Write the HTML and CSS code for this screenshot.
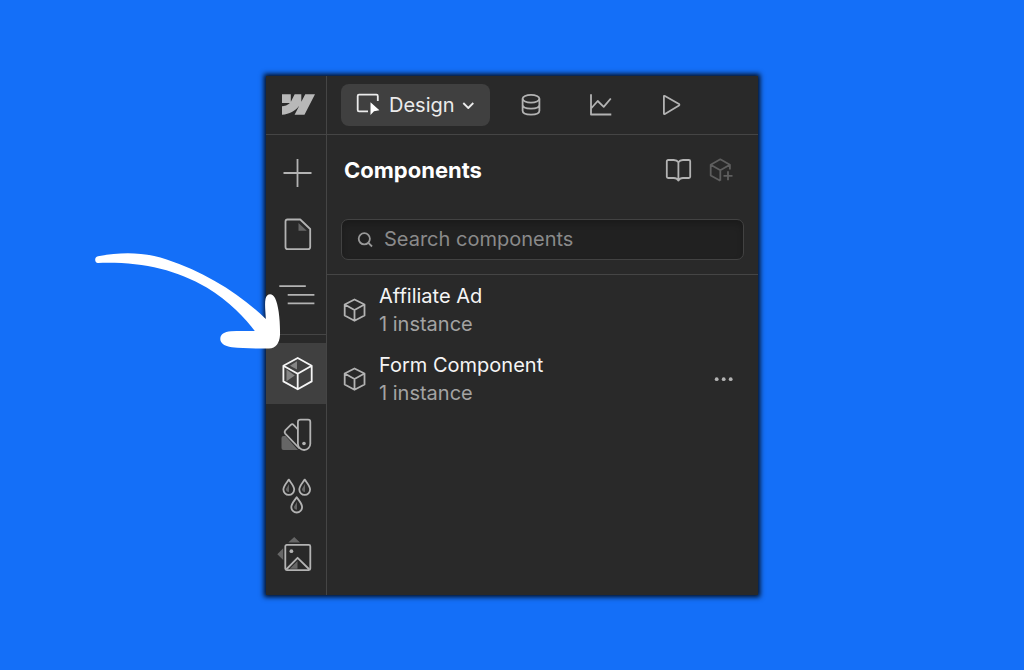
FILE: index.html
```html
<!DOCTYPE html>
<html lang="en">
<head>
  <meta charset="UTF-8">
  <title>Components</title>
  <meta name="viewport" content="width=device-width, initial-scale=1.0">
  <link rel="stylesheet" href="styles.css">
</head>
<body>

<!-- Cube shared by the component rows -->
<svg class="sprite" aria-hidden="true">
  <symbol id="cube" viewBox="0 0 28 28">
    <path d="M13.5 3.5 23.5 8.5V19.5L13.5 24.8 3.7 19.5V8.5ZM3.7 8.5 13.5 14 23.5 8.5M13.5 14V24.8"/>
  </symbol>
</svg>

<div class="app">
  <nav class="sidebar" aria-label="Tools">
    <a class="logo" href="#" aria-label="Home">
      <svg width="33" height="21" viewBox="0 4.5 24 15"><path d="m24 4.515-7.658 14.97H9.149l3.205-6.204h-.144C9.566 16.713 5.621 18.973 0 19.485v-6.118s3.596-.213 5.71-2.435H0V4.515h6.417v5.278l.144-.001 2.622-5.277h4.854v5.244h.144l2.72-5.244H24Z"/></svg>
    </a>

    <div class="tools">
      <button class="tool" aria-label="Add">
        <svg class="icon" width="40" height="41"><path d="M7.5 20H35.5M21.5 6V34"/></svg>
      </button>
      <button class="tool" aria-label="Pages">
        <svg class="icon" width="40" height="41">
          <path class="shade" d="M22.5 9V16.8H30.8Z"/>
          <path d="M11.500 5.500H24.200L34.200 15V33Q34.200 35.200 32 35.200H11.700Q9.500 35.200 9.500 33V7.500Q9.500 5.500 11.500 5.500Z"/>
        </svg>
      </button>
      <button class="tool" aria-label="Navigator">
        <svg class="icon" width="40" height="41"><path d="M3.3 11.2H29.8M11.7 19.8H38.4M11.7 28.4H38.4"/></svg>
      </button>
    </div>

    <div class="tools">
      <button class="tool active" aria-label="Components">
        <svg class="icon" width="40" height="41">
          <path class="shade" d="M14 12.8 21 8.2V16.5ZM10.5 16.5V28.2L18.8 22.5Z"/>
          <path d="M21.7 5 35.7 12.8V28.4L21.7 36.3 7.4 28.4V12.8ZM7.4 12.8 21.7 20.8 35.7 12.8M21.7 20.8V36.3"/>
        </svg>
      </button>
      <button class="tool" aria-label="Variables">
        <svg class="icon" width="40" height="41">
          <path class="shade" d="M5.5 24Q5.5 22 7.5 22H9.5L22 36H7.5Q5.5 36 5.5 34Z"/>
          <path d="M24.5 5.7H32Q34.3 5.7 34.3 8V29.8A6.2 6.2 0 0 1 21.9 29.8V8Q21.9 5.7 24.5 5.7Z"/>
          <path d="M21.9 15.5 17.6 10.8Q16.3 9.3 14.8 10.8L9.3 16.4Q8 18 9.2 19.6L23.5 34.5"/>
          <circle class="dot" cx="28" cy="29.5" r="1.8"/>
        </svg>
      </button>
      <button class="tool" aria-label="Style selectors">
        <svg class="icon" width="40" height="41">
          <path class="shade" d="M13 9V17Q10 17 10 14ZM29 9V17Q26 17 26 14ZM21 26.7V34.7Q18 34.7 18 31.7Z"/>
          <path d="M12.8 4.6C15 8 18.2 11 18.2 14.5A5.4 5.4 0 0 1 7.4 14.5C7.4 11 10.6 8 12.8 4.6Z"/>
          <path d="M28.7 4.6C30.9 8 34.1 11 34.1 14.5A5.4 5.4 0 0 1 23.3 14.5C23.3 11 26.5 8 28.7 4.6Z"/>
          <path d="M20.7 22.2C22.9 25.6 26.1 28.6 26.1 32.1A5.4 5.4 0 0 1 15.3 32.1C15.3 28.6 18.5 25.6 20.7 22.2Z"/>
        </svg>
      </button>
      <button class="tool" aria-label="Assets">
        <svg class="icon" width="40" height="41">
          <path class="shade" d="M12.3 6.5 18.2 1 24 6.5ZM7.2 12.3V24L1.3 18.2ZM21.5 25V32.8H13.8Z"/>
          <rect x="9.3" y="8.9" width="25" height="25.2" rx="1.5"/>
          <path d="M10.2 33.5 21.6 21.8 33.4 33.5"/>
          <circle class="dot" cx="15.4" cy="15.2" r="1.9"/>
        </svg>
      </button>
    </div>
  </nav>

  <main class="main">
    <header class="topbar">
      <button class="mode">
        <svg class="icon" width="26" height="26">
          <path d="M12 19.3H3Q1.7 19.3 1.7 18V4Q1.7 2.7 3 2.7H20.5Q21.8 2.7 21.8 4V9"/>
          <path class="cursor" d="M14.5 10.2V23L18 19.2L23.4 18.2Z"/>
        </svg>
        <span>Design</span>
        <svg class="icon" width="14" height="14"><path d="M1.3 5 6.3 10 11.3 5"/></svg>
      </button>
      <div class="views">
        <button class="icon-button" aria-label="CMS">
          <svg class="icon" width="28" height="28"><ellipse cx="14" cy="7.7" rx="8.4" ry="3.9"/><path d="M5.6 7.7V19.8C5.6 25 22.4 25 22.4 19.8V7.7M5.6 13.7C5.6 18.9 22.4 18.9 22.4 13.7"/></svg>
        </button>
        <button class="icon-button" aria-label="Insights">
          <svg class="icon" width="28" height="28"><path d="M4 3.3V23.5H24.3M4.5 17 10.7 10 16.7 15.9 23.8 7.5"/></svg>
        </button>
        <button class="icon-button" aria-label="Preview">
          <svg class="icon" width="28" height="28"><path d="M6.9 5.500Q6.900 4.500 7.900 5L22 13Q22.800 13.700 22 14.400L7.900 22.900Q6.900 23.400 6.900 22.400Z"/></svg>
        </button>
      </div>
    </header>

    <div class="panel-head">
      <h1>Components</h1>
      <div class="actions">
        <button class="icon-button" aria-label="Libraries">
          <svg class="icon" width="28" height="28"><path d="M13.4 6.2Q12 4 8.8 4H3.2Q1.8 4 1.8 5.3V20.8Q1.8 22 3.2 22H8.8Q12 22 13.4 24.5Q14.8 22 18 22H23.8Q25.2 22 25.2 20.8V5.3Q25.2 4 23.8 4H18Q14.8 4 13.4 6.2ZM13.4 6.2V24.5"/></svg>
        </button>
        <button class="icon-button" aria-label="New component" disabled>
          <svg class="icon" width="28" height="28"><path d="M13.3 24.8 3.7 19.5V8.7L13.3 3.3 22.9 8.7V13.5M3.7 8.7 13.3 14.2 22.9 8.7M13.3 14.2V24.8M21 15.3V24.3M16.5 19.8H25.5"/></svg>
        </button>
      </div>
    </div>

    <label class="search">
      <svg class="icon" width="20" height="20"><circle cx="9.3" cy="9.8" r="5.6"/><path d="M13.4 13.9 17 17.5"/></svg>
      <input type="search" placeholder="Search components" aria-label="Search components">
    </label>

    <ul class="list">
      <li class="row">
        <svg class="icon" width="28" height="28"><use href="#cube"/></svg>
        <div class="info">
          <p class="name">Affiliate Ad</p>
          <p class="count">1 instance</p>
        </div>
      </li>
      <li class="row">
        <svg class="icon" width="28" height="28"><use href="#cube"/></svg>
        <div class="info">
          <p class="name">Form Component</p>
          <p class="count">1 instance</p>
        </div>
        <button class="icon-button" aria-label="More options">
          <svg class="icon" width="28" height="28"><g class="dot"><circle cx="6.700" cy="14.200" r="1.900"/><circle cx="13.700" cy="14.200" r="1.900"/><circle cx="20.700" cy="14.200" r="1.900"/></g></svg>
        </button>
      </li>
    </ul>
  </main>

  <!-- Arrow pointing at the components tool -->
  <svg class="arrow" width="188" height="98" viewBox="94 252 188 98" aria-hidden="true">
    <path d="M98 256.3C120 252 143 251.500 166.700 259.500C205 272 240 294 265.800 319C265.500 312 264.500 304 265.500 299C266.500 293 272.500 292.500 275 298C278.500 305 280.300 320 280 335C279.500 343 276 348.500 269 348.500C256 348.600 242 348.200 232 347.200C224 346 220.200 343 220.300 338.800C220.500 334 224 332 231 331.300C239 330.600 247 331 254.800 331C246 319 229 301 206.700 287.500C175 269 140 261.500 98 262.900C94.500 263 94 257 98 256.300Z"/>
  </svg>
</div>

</body>
</html>
```

FILE: styles.css
```css
* {
  box-sizing: border-box;
}
body {
  background-color: #146ff8;
  color: #fff;
  font-family: Inter, "Liberation Sans", sans-serif;
  font-size: 20px;
  line-height: 28px;
  margin: 0;
  min-height: 100vh;
  padding: 24px;
  display: flex;
  align-items: center;
  justify-content: center;
}
h1, p, ul {
  margin: 0;
  padding: 0;
}
button {
  background: none;
  border: 0;
  padding: 0;
  color: inherit;
  font: inherit;
  cursor: pointer;
}
svg {
  display: block;
  flex: none;
}
.sprite {
  position: absolute;
  width: 0;
  height: 0;
}
.icon {
  fill: none;
  stroke: currentColor;
  stroke-width: 1.8;
  stroke-linejoin: round;
}
.icon .shade {
  fill: #666;
  stroke: none;
}
.icon .dot {
  fill: currentColor;
  stroke: none;
}
.app {
  position: relative;
  display: flex;
  width: 100%;
  max-width: 492px;
  background-color: #292929;
  box-shadow: 0 0 5px 2px rgba(0, 0, 0, 0.9);
}

/* Sidebar */
.sidebar {
  width: 61px;
  flex: none;
  border-right: 1px solid #454545;
  color: #b3b3b3;
}
.logo {
  display: flex;
  align-items: center;
  justify-content: center;
  height: 59px;
  padding-left: 4px;
  border-bottom: 1px solid #454545;
}
.logo path {
  fill: #b8b8b8;
}
.tools {
  padding: 8px 0;
}
.tools + .tools {
  border-top: 1px solid #454545;
}
.tool {
  display: flex;
  align-items: center;
  justify-content: center;
  width: 100%;
  height: 61px;
}
.tool.active {
  background-color: #404040;
  color: #f5f5f5;
}
.active .shade {
  fill: #858585;
}

/* Main panel */
.main {
  flex: 1;
  min-width: 0;
}
.topbar {
  display: flex;
  align-items: center;
  gap: 27px;
  height: 59px;
  padding: 0 14px;
  border-bottom: 1px solid #454545;
}
.mode {
  display: flex;
  align-items: center;
  gap: 7px;
  height: 42px;
  padding: 0 14px 0 15px;
  border-radius: 8px;
  background-color: #404040;
  color: #ebebeb;
}
.mode .cursor {
  fill: #fff;
  stroke: none;
}
.views {
  display: flex;
  gap: 42px;
}
.icon-button {
  color: #b3b3b3;
}
.icon-button:disabled {
  color: #5e5e5e;
  cursor: default;
}
.panel-head {
  display: flex;
  align-items: center;
  justify-content: space-between;
  height: 70px;
  padding: 0 23px 0 17px;
}
h1 {
  font-size: 22px;
  font-weight: 650;
}
.actions {
  display: flex;
  gap: 14px;
}
.search {
  display: flex;
  align-items: center;
  gap: 9px;
  height: 41px;
  margin: 14px;
  padding: 0 13px;
  border: 1px solid #424242;
  border-radius: 7px;
  background-color: #212121;
  box-shadow: inset 0 4px 6px rgba(0, 0, 0, 0.2);
  color: #999;
}
.search input {
  flex: 1;
  min-width: 0;
  padding: 0;
  border: 0;
  outline: 0;
  background: none;
  color: #fff;
  font: inherit;
}
.search input::placeholder {
  color: #8a8a8a;
}
.list {
  list-style: none;
  border-top: 1px solid #454545;
}
.row {
  display: flex;
  align-items: center;
  gap: 10px;
  padding: 7px 20px 6px 14px;
  color: #b3b3b3;
}
.info {
  flex: 1;
}
.name {
  color: #f5f5f5;
}
.count {
  color: #a3a3a3;
}

/* Callout arrow, lies over the sidebar edge */
.arrow {
  position: absolute;
  top: 176px;
  left: -172px;
  fill: #fff;
}
```
